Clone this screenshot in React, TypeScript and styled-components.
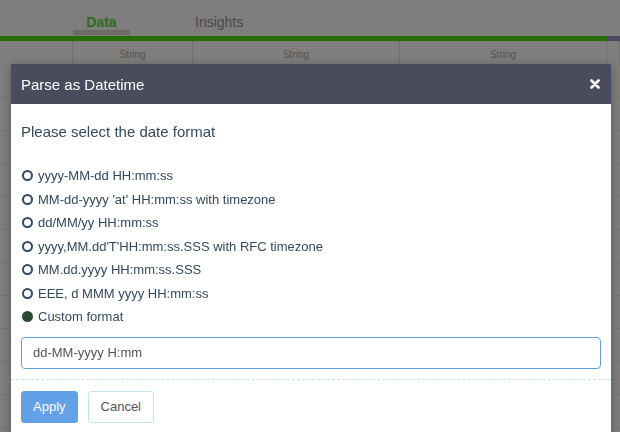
import React, { useState } from "react"
import styled, { createGlobalStyle } from "styled-components"

const formats = [
  "yyyy-MM-dd HH:mm:ss",
  "MM-dd-yyyy 'at' HH:mm:ss with timezone",
  "dd/MM/yy HH:mm:ss",
  "yyyy,MM.dd'T'HH:mm:ss.SSS with RFC timezone",
  "MM.dd.yyyy HH:mm:ss.SSS",
  "EEE, d MMM yyyy HH:mm:ss",
  "Custom format",
]

export default function App() {
  const [selected, setSelected] = useState(6)
  const [custom, setCustom] = useState("dd-MM-yyyy H:mm")

  return (
    <>
      <GlobalStyle />
      <Page>
        <Tabs>
          <Tab $active>Data</Tab>
          <Tab>Insights</Tab>
        </Tabs>
        <GreenBar>
          <BarFill />
          <BarEnd />
        </GreenBar>
        <HeaderRow>
          <HeadCell $width={73} />
          <HeadCell $width={120}>String</HeadCell>
          <HeadCell $width={207}>String</HeadCell>
          <HeadCell $width={207}>String</HeadCell>
          <HeadCell $width={13} />
        </HeaderRow>
        <Rows>
          {Array.from({ length: 14 }).map((_, i) => (
            <Row key={i}>
              <Cell $width={73} />
              <Cell $width={120} />
              <Cell $width={207} />
              <Cell $width={207} />
            </Row>
          ))}
        </Rows>
      </Page>
      <Overlay />
      <Modal>
        <ModalHeader>
          <Title>Parse as Datetime</Title>
          <Close aria-label="close">
            <svg width="10" height="10" viewBox="0 0 10 10">
              <path
                d="M1.5 1.5 L8.5 8.5 M8.5 1.5 L1.5 8.5"
                stroke="#fff"
                strokeWidth="2.6"
                strokeLinecap="round"
              />
            </svg>
          </Close>
        </ModalHeader>
        <ModalBody>
          <Prompt>Please select the date format</Prompt>
          <Options>
            {formats.map((f, i) => (
              <Option key={f} onClick={() => setSelected(i)}>
                <Radio $checked={selected === i} />
                {f}
              </Option>
            ))}
          </Options>
          <FormatInput
            value={custom}
            onChange={(e) => setCustom(e.target.value)}
          />
        </ModalBody>
        <ModalFooter>
          <Button $primary>Apply</Button>
          <Button>Cancel</Button>
        </ModalFooter>
      </Modal>
    </>
  )
}

const GlobalStyle = createGlobalStyle`
  html, body {
    margin: 0;
    padding: 0;
    width: 620px;
    height: 432px;
    overflow: hidden;
    font-family: "Liberation Sans", Arial, sans-serif;
    background: #fefcf8;
  }
`

const Page = styled.div`
  width: 620px;
  height: 432px;
  background: #fefcf8;
`

const Tabs = styled.div`
  display: flex;
  height: 36px;
  padding-left: 73px;
  align-items: flex-start;
`

const Tab = styled.div<{ $active?: boolean }>`
  width: ${(p) => (p.$active ? "57px" : "auto")};
  margin-right: ${(p) => (p.$active ? "65px" : "0")};
  padding-top: 14px;
  height: 16px;
  text-align: center;
  font-size: 14px;
  font-weight: ${(p) => (p.$active ? "bold" : "normal")};
  color: ${(p) => (p.$active ? "#5ed83e" : "#8e8ea4")};
  border-bottom: ${(p) => (p.$active ? "5px solid #dcd4ca" : "none")};
`

const GreenBar = styled.div`
  display: flex;
  height: 5px;
`

const BarFill = styled.div`
  flex: 1;
  background: #4ed80e;
`

const BarEnd = styled.div`
  width: 13px;
  background: #9496b8;
`

const HeaderRow = styled.div`
  display: flex;
  height: 24px;
`

const HeadCell = styled.div<{ $width: number }>`
  width: ${(p) => p.$width}px;
  border-right: 1px dotted #c8c8c8;
  box-sizing: border-box;
  font-size: 10px;
  color: #a8a8a8;
  text-align: center;
  line-height: 28px;
`

const Rows = styled.div`
  display: flex;
  flex-direction: column;
`

const Row = styled.div`
  display: flex;
  height: 32px;
  border-bottom: 1px solid #eaeaea;
`

const Cell = styled.div<{ $width: number }>`
  width: ${(p) => p.$width}px;
  border-right: 1px dotted #d8d8d8;
  box-sizing: border-box;
`

const Overlay = styled.div`
  position: fixed;
  inset: 0;
  background: rgba(0, 0, 0, 0.5);
`

const Modal = styled.div`
  position: fixed;
  left: 11px;
  top: 64px;
  width: 600px;
  background: #fff;
  box-shadow: 0 2px 10px rgba(0, 0, 0, 0.3);
`

const ModalHeader = styled.div`
  display: flex;
  align-items: center;
  justify-content: space-between;
  height: 40px;
  padding: 0 10px;
  background: #4a4b5c;
`

const Title = styled.div`
  color: #fff;
  font-size: 15px;
`

const Close = styled.button`
  display: flex;
  padding: 0;
  margin-right: 1px;
  border: none;
  background: none;
  cursor: pointer;
`

const ModalBody = styled.div`
  padding: 20px 10px 0;
`

const Prompt = styled.div`
  font-size: 15px;
  color: #34495e;
  line-height: 16px;
  margin-bottom: 24px;
`

const Options = styled.div`
  display: flex;
  flex-direction: column;
`

const Option = styled.label`
  display: flex;
  align-items: center;
  gap: 5px;
  height: 23.5px;
  font-size: 13px;
  color: #34495e;
  cursor: pointer;
`

const Radio = styled.span<{ $checked: boolean }>`
  width: 11px;
  height: 11px;
  box-sizing: border-box;
  border-radius: 50%;
  margin-left: 1px;
  border: 2px solid ${(p) => (p.$checked ? "#2e4a36" : "#34495e")};
  background: ${(p) => (p.$checked ? "#2e4a36" : "#fff")};
`

const FormatInput = styled.input`
  display: block;
  box-sizing: border-box;
  width: 580px;
  height: 32px;
  margin-top: 8px;
  padding: 0 11px;
  border: 1px solid #62a0e0;
  border-radius: 4px;
  font-family: "Liberation Sans", Arial, sans-serif;
  font-size: 13px;
  color: #555;
  outline: none;
`

const ModalFooter = styled.div`
  display: flex;
  gap: 10px;
  margin-top: 10px;
  padding: 11px 10px 20px;
  border-top: 1px dashed #c4eaf0;
`

const Button = styled.button<{ $primary?: boolean }>`
  height: 32px;
  padding: 0 ${(p) => (p.$primary ? "11px" : "12px")};
  border-radius: 3px;
  font-family: "Liberation Sans", Arial, sans-serif;
  font-size: 13px;
  border: 1px solid ${(p) => (p.$primary ? "#62a0e8" : "#bfe8ee")};
  background: ${(p) => (p.$primary ? "#62a0e8" : "#fff")};
  color: ${(p) => (p.$primary ? "#fff" : "#555")};
  cursor: pointer;
`
